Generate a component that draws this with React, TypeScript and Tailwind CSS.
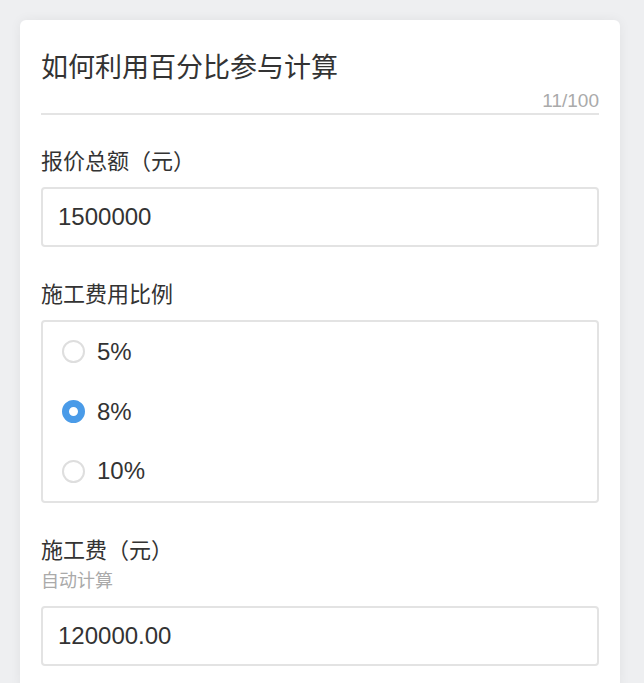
import { useState } from "react";

const font = { fontFamily: '"Liberation Sans", "Noto Sans CJK SC", sans-serif' };

const ratios = ["5%", "8%", "10%"];

export default function App() {
  const [ratio, setRatio] = useState("8%");
  const total = 1500000;
  const fee = ((total * parseFloat(ratio)) / 100).toFixed(2);

  return (
    <div className="min-h-[683px] bg-[#eeeff1] px-5 pt-5" style={font}>
      <div className="w-[600px] rounded-md bg-white px-[21px] pt-[30px] pb-6 shadow-[0_0_12px_rgba(0,0,0,0.06)]">
        <h1 className="text-[27px] leading-[36px] text-[#333]">如何利用百分比参与计算</h1>
        <div className="mt-[3px] border-b-2 border-[#e4e4e4] pb-0 text-right text-[19px] leading-[24px] text-[#aaa]">
          11/100
        </div>

        <p className="mt-[32px] text-[22px] leading-[30px] text-[#333]">报价总额（元）</p>
        <div className="mt-[10px] flex h-[60px] items-center rounded border-2 border-[#e3e3e3] px-[15px] text-[24px] text-[#333]">
          1500000
        </div>

        <p className="mt-[33px] text-[22px] leading-[30px] text-[#333]">施工费用比例</p>
        <div className="mt-[10px] flex h-[183px] flex-col justify-center rounded border-2 border-[#e3e3e3] px-[19px]">
          {ratios.map((r) => {
            const checked = r === ratio;
            return (
              <button
                key={r}
                type="button"
                onClick={() => setRatio(r)}
                className="flex h-[60px] items-center gap-[12px] text-left text-[24px] text-[#333]"
              >
                <span
                  className={
                    checked
                      ? "h-[23px] w-[23px] rounded-full border-[7px] border-[#4a9be8] bg-white"
                      : "h-[23px] w-[23px] rounded-full border-2 border-[#dedede] bg-white"
                  }
                />
                {r}
              </button>
            );
          })}
        </div>

        <p className="mt-[33px] text-[22px] leading-[30px] text-[#333]">施工费（元）</p>
        <p className="mt-[3px] text-[18px] leading-[24px] text-[#aaa]">自动计算</p>
        <div className="mt-[13px] flex h-[60px] items-center rounded border-2 border-[#e3e3e3] px-[15px] text-[24px] text-[#333]">
          {fee}
        </div>
      </div>
    </div>
  );
}
